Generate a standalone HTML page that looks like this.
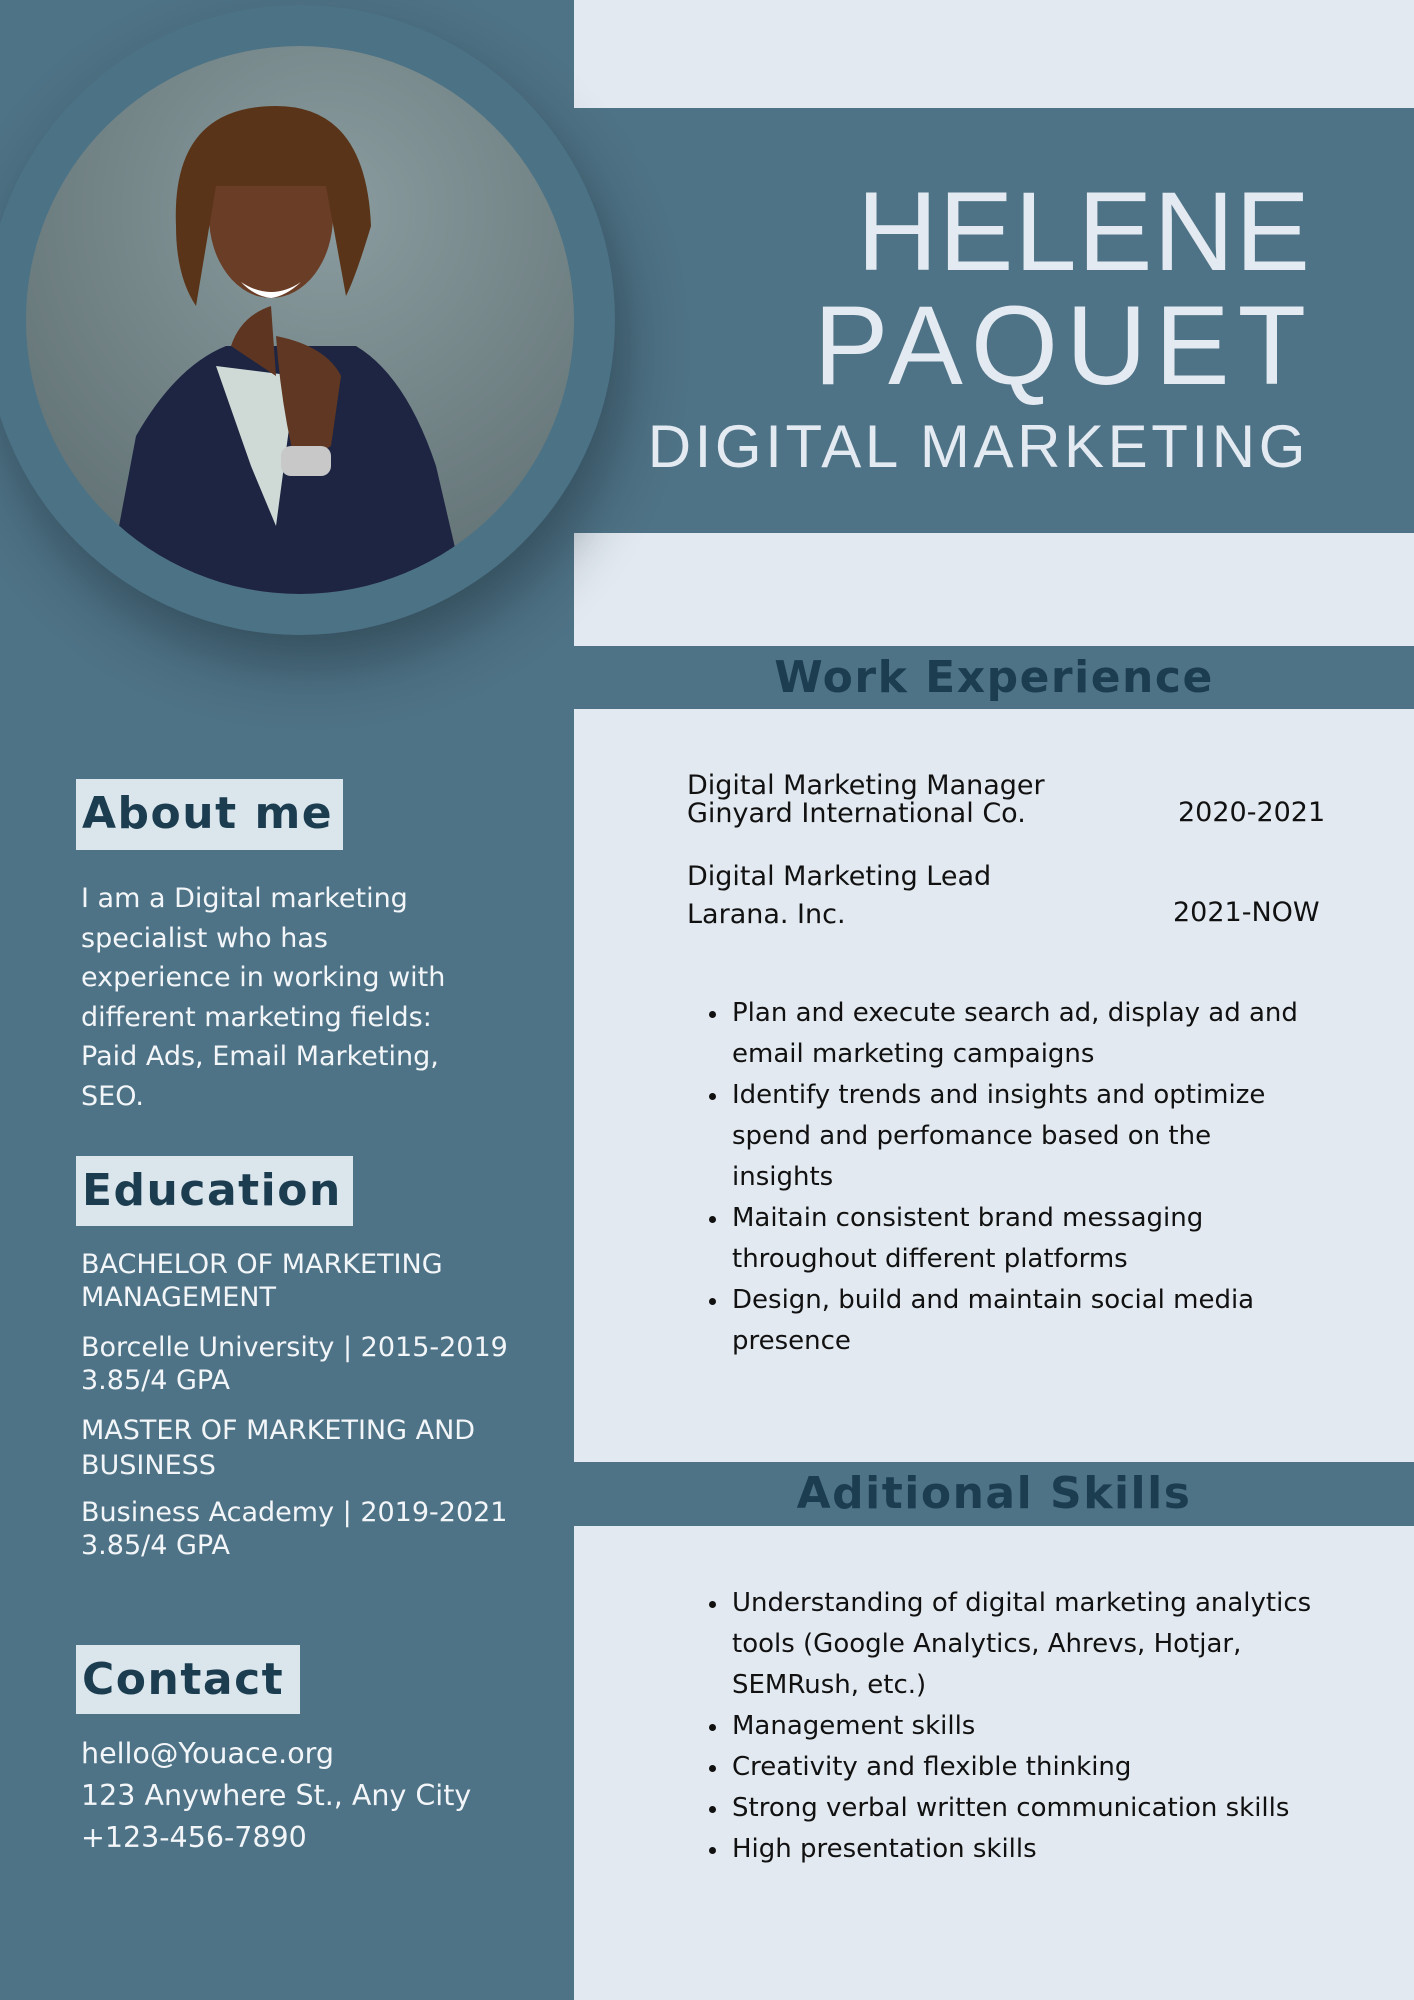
<!DOCTYPE html>
<html><head><meta charset="utf-8"><style>
*{margin:0;padding:0;box-sizing:border-box}
body{width:1414px;height:2000px;position:relative;background:#e2e9f0;font-family:"DejaVu Sans","Liberation Sans",sans-serif;overflow:hidden}
.a{position:absolute;white-space:nowrap}
.dark{background:#4f7386}
.h{color:#1c3d50;font-weight:bold}
.box{position:absolute;background:#dae5ec;color:#1c3d50;font-weight:bold;font-size:44px;letter-spacing:1.5px;line-height:70px;padding-left:6px}
.lt{color:#f3f6f9;font-size:27px}
.rt{color:#111;font-size:27px}
ul.b{position:absolute;left:714px;color:#111;font-size:26px;line-height:41px;list-style:none}
ul.b li{position:relative;padding-left:18px}
ul.b li:before{content:"";position:absolute;left:-5px;top:18px;width:7px;height:7px;border-radius:50%;background:#111}
</style></head><body>
<div class="a dark" style="left:0;top:0;width:574px;height:2000px"></div>
<div class="a dark" style="left:574px;top:108px;width:840px;height:425px"></div>
<div class="a dark" style="left:574px;top:646px;width:840px;height:63px"></div>
<div class="a dark" style="left:574px;top:1462px;width:840px;height:64px"></div>

<div class="a" style="left:-15px;top:5px;width:630px;height:630px;border-radius:50%;background:#4c7285;box-shadow:10px 30px 60px rgba(20,35,45,.45)"></div>
<svg class="a" style="left:26px;top:46px" width="548" height="549" viewBox="0 0 548 549">
<defs><clipPath id="c"><circle cx="274" cy="274" r="274"/></clipPath>
<radialGradient id="g" cx="0.55" cy="0.3" r="0.8"><stop offset="0" stop-color="#8a9c9f"/><stop offset="1" stop-color="#5e6e71"/></radialGradient></defs>
<g clip-path="url(#c)">
<rect width="548" height="549" fill="url(#g)"/>
<path d="M80 549 L110 390 Q150 320 200 300 L330 300 Q380 330 410 420 L440 549Z" fill="#1d2543"/>
<path d="M190 320 L225 420 L250 480 L270 330Z" fill="#cfdad6"/>
<ellipse cx="245" cy="170" rx="62" ry="82" fill="#6a3d26"/>
<path d="M150 180 Q145 60 250 60 Q340 60 345 180 Q330 230 320 250 L300 140 L190 140 L170 260 Q150 230 150 180Z" fill="#5a3418"/>
<path d="M245 260 Q215 270 205 300 L250 330Z" fill="#5e3520"/>
<path d="M250 290 Q300 300 315 330 L305 400 L270 420 Q255 360 250 290Z" fill="#5f3722"/>
<path d="M215 236 Q245 256 275 236 Q260 250 245 252 Q228 250 215 236Z" fill="#fff"/>
<rect x="255" y="400" width="50" height="30" rx="10" fill="#c8c8c8"/>
</g></svg>

<div class="a" style="right:103px;top:172px;font-size:112px;line-height:120px;color:#e3eaf1;letter-spacing:1px;font-family:'Liberation Sans',sans-serif">HELENE</div>
<div class="a" style="right:100px;top:286px;font-size:112px;line-height:120px;color:#e3eaf1;letter-spacing:8px;font-family:'Liberation Sans',sans-serif">PAQUET</div>
<div class="a" style="right:105px;top:414px;font-size:60px;line-height:66px;color:#e3eaf1;letter-spacing:3.6px;font-family:'Liberation Sans',sans-serif">DIGITAL MARKETING</div>

<div class="a h" style="left:574px;width:840px;text-align:center;top:646px;font-size:44px;line-height:63px;letter-spacing:1.5px">Work Experience</div>
<div class="a h" style="left:574px;width:840px;text-align:center;top:1462px;font-size:44px;line-height:64px;letter-spacing:1.5px">Aditional Skills</div>

<div class="box" style="left:76px;top:779px;width:267px;height:71px">About me</div>
<div class="a lt" style="left:81px;top:879px;line-height:39.5px">I am a Digital marketing<br>specialist who has<br>experience in working with<br>different marketing fields:<br>Paid Ads, Email Marketing,<br>SEO.</div>
<div class="box" style="left:76px;top:1156px;width:277px;height:70px">Education</div>
<div class="a lt" style="left:81px;top:1248px;line-height:33px">BACHELOR OF MARKETING<br>MANAGEMENT</div>
<div class="a lt" style="left:81px;top:1331px;line-height:33px">Borcelle University | 2015-2019<br>3.85/4 GPA</div>
<div class="a lt" style="left:81px;top:1413px;line-height:35px">MASTER OF MARKETING AND<br>BUSINESS</div>
<div class="a lt" style="left:81px;top:1496px;line-height:33px">Business Academy | 2019-2021<br>3.85/4 GPA</div>
<div class="box" style="left:76px;top:1645px;width:224px;height:69px">Contact</div>
<div class="a lt" style="left:81px;top:1733px;line-height:42px;font-size:28.5px">hello@Youace.org<br>123 Anywhere St., Any City<br>+123-456-7890</div>

<div class="a rt" style="left:687px;top:772px;line-height:28px">Digital Marketing Manager<br>Ginyard International Co.</div>
<div class="a rt" style="left:1178px;top:797px">2020-2021</div>
<div class="a rt" style="left:687px;top:861px">Digital Marketing Lead</div>
<div class="a rt" style="left:687px;top:899px">Larana. Inc.</div>
<div class="a rt" style="left:1173px;top:897px">2021-NOW</div>

<ul class="b" style="top:993px">
<li>Plan and execute search ad, display ad and<br>email marketing campaigns</li>
<li>Identify trends and insights and optimize<br>spend and perfomance based on the<br>insights</li>
<li>Maitain consistent brand messaging<br>throughout different platforms</li>
<li>Design, build and maintain social media<br>presence</li>
</ul>
<ul class="b" style="top:1583px">
<li>Understanding of digital marketing analytics<br>tools (Google Analytics, Ahrevs, Hotjar,<br>SEMRush, etc.)</li>
<li>Management skills</li>
<li>Creativity and flexible thinking</li>
<li>Strong verbal written communication skills</li>
<li>High presentation skills</li>
</ul>
</body></html>
